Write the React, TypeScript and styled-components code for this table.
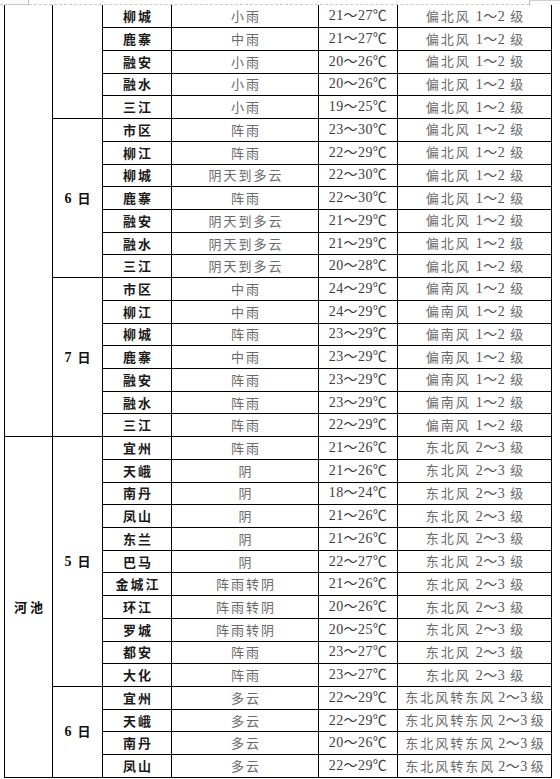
import React, { FC } from 'react'
import styled, { createGlobalStyle } from 'styled-components'

const GlobalStyle = createGlobalStyle`
	html, body {
		margin: 0;
		padding: 0;
		background: #fff;
	}
`

const Page = styled.div`
	width: 560px;
	height: 779px;
	overflow: hidden;
	background: #fff;
`

const PageEdge = styled.div`
	display: flex;
	height: 5px;
`

const EdgeGap = styled.div`
	width: 8px;
	border-bottom: 1px dashed #c8c8c8;
`

const CornerMark = styled.div<{ $side: 'Left' | 'Right' }>`
	width: ${(props) => (props.$side === 'Left' ? '20px' : '30px')};
	background: #fafafa;
	${(props) =>
		props.$side === 'Left'
			? 'border-right: 1px solid #bdbdbd; border-bottom: 1px solid #c8c8c8;'
			: 'border-left: 1px solid #bdbdbd; border-top: 1px solid #d0d0d0;'}
`

const EdgeLine = styled.div`
	flex: 1;
	border-bottom: 1px dashed #c8c8c8;
`

const Table = styled.table`
	margin-left: 4px;
	width: 547px;
	border-collapse: collapse;
	table-layout: fixed;
	font-family: 'Noto Sans CJK SC', 'Liberation Serif', serif;
`

const Col = styled.col<{ $w: number }>`
	width: ${(props) => props.$w}px;
`

const Row = styled.tr`
	height: 22.7px;
`

const Cell = styled.td<{ $top?: boolean }>`
	height: 21.72px;
	padding: 0;
	border: 1px solid #000;
	${(props) => (props.$top ? 'border-top: none;' : '')}
	text-align: center;
	vertical-align: middle;
	white-space: nowrap;
	line-height: 14px;
	overflow: hidden;
`

const RegionCell = styled(Cell)`
	font-size: 13px;
	font-weight: 700;
	color: #111;
	letter-spacing: 3px;
	padding-left: 3px;
`

const DayCell = styled(Cell)`
	font-size: 13px;
	font-weight: 700;
	color: #111;
	span {
		font-family: 'Liberation Serif', serif;
		font-size: 14px;
		margin-right: 6px;
	}
`

const PlaceCell = styled(Cell)`
	font-size: 13px;
	font-weight: 700;
	color: #1a1a1a;
	letter-spacing: 2px;
	padding-left: 2px;
`

const WeatherCell = styled(Cell)`
	font-size: 13px;
	color: #6a6a6a;
	letter-spacing: 2px;
	padding-left: 2px;
`

const TempCell = styled(Cell)`
	font-family: 'Liberation Serif', 'Noto Sans CJK SC', serif;
	font-size: 14px;
	color: #3c3c3c;
	letter-spacing: 0.4px;
`

const WindCell = styled(Cell)`
	font-size: 13px;
	color: #6a6a6a;
	letter-spacing: 2px;
	padding-left: 2px;
`

const Level = styled.em<{ $packed: boolean }>`
	font-style: normal;
	font-family: 'Liberation Serif', 'Noto Sans CJK SC', serif;
	font-size: 14px;
	color: #555;
	letter-spacing: 0.5px;
	margin: ${(props) => (props.$packed ? '0 3px 0 3px' : '0')};
`

interface Forecast {
	place: string
	weather: string
	temp: string
	wind: string
	range: string
}

interface DayGroup {
	day: string
	rows: Forecast[]
}

interface RegionGroup {
	region: string
	days: DayGroup[]
}

const f = (
	place: string,
	weather: string,
	temp: string,
	wind: string,
	range: string
): Forecast => ({ place, weather, temp, wind, range })

const north = '偏北风'
const south = '偏南风'
const ne = '东北风'
const neE = '东北风转东风'

const regions: RegionGroup[] = [
	{
		region: '',
		days: [
			{
				day: '',
				rows: [
					f('柳城', '小雨', '21～27℃', north, '1～2'),
					f('鹿寨', '中雨', '21～27℃', north, '1～2'),
					f('融安', '小雨', '20～26℃', north, '1～2'),
					f('融水', '小雨', '20～26℃', north, '1～2'),
					f('三江', '小雨', '19～25℃', north, '1～2'),
				],
			},
			{
				day: '6',
				rows: [
					f('市区', '阵雨', '23～30℃', north, '1～2'),
					f('柳江', '阵雨', '22～29℃', north, '1～2'),
					f('柳城', '阴天到多云', '22～30℃', north, '1～2'),
					f('鹿寨', '阵雨', '22～30℃', north, '1～2'),
					f('融安', '阴天到多云', '21～29℃', north, '1～2'),
					f('融水', '阴天到多云', '21～29℃', north, '1～2'),
					f('三江', '阴天到多云', '20～28℃', north, '1～2'),
				],
			},
			{
				day: '7',
				rows: [
					f('市区', '中雨', '24～29℃', south, '1～2'),
					f('柳江', '中雨', '24～29℃', south, '1～2'),
					f('柳城', '阵雨', '23～29℃', south, '1～2'),
					f('鹿寨', '中雨', '23～29℃', south, '1～2'),
					f('融安', '阵雨', '23～29℃', south, '1～2'),
					f('融水', '阵雨', '23～29℃', south, '1～2'),
					f('三江', '阵雨', '22～29℃', south, '1～2'),
				],
			},
		],
	},
	{
		region: '河池',
		days: [
			{
				day: '5',
				rows: [
					f('宜州', '阵雨', '21～26℃', ne, '2～3'),
					f('天峨', '阴', '21～26℃', ne, '2～3'),
					f('南丹', '阴', '18～24℃', ne, '2～3'),
					f('凤山', '阴', '21～26℃', ne, '2～3'),
					f('东兰', '阴', '21～26℃', ne, '2～3'),
					f('巴马', '阴', '22～27℃', ne, '2～3'),
					f('金城江', '阵雨转阴', '21～26℃', ne, '2～3'),
					f('环江', '阵雨转阴', '20～26℃', ne, '2～3'),
					f('罗城', '阵雨转阴', '20～25℃', ne, '2～3'),
					f('都安', '阵雨', '23～27℃', ne, '2～3'),
					f('大化', '阵雨', '23～27℃', ne, '2～3'),
				],
			},
			{
				day: '6',
				rows: [
					f('宜州', '多云', '22～29℃', neE, '2～3'),
					f('天峨', '多云', '22～29℃', neE, '2～3'),
					f('南丹', '多云', '20～26℃', neE, '2～3'),
					f('凤山', '多云', '22～29℃', neE, '2～3'),
				],
			},
		],
	},
]

const WindText: FC<{ wind: string; range: string }> = ({ wind, range }) => {
	// short winds get a gap around the level, the long ones are packed tighter
	const packed = wind.length > 3
	const gap = packed ? '' : ' '
	return (
		<>
			{wind}
			{gap}
			<Level $packed={packed}>{range}</Level>
			{gap}级
		</>
	)
}

const App: FC = () => {
	const body: React.ReactNode[] = []
	regions.forEach((region, ri) => {
		const regionSpan = region.days.reduce((n, d) => n + d.rows.length, 0)
		region.days.forEach((group, di) => {
			group.rows.forEach((row, i) => {
				const top = ri === 0 && di === 0 && i === 0
				body.push(
					<Row key={`${ri}-${di}-${i}`}>
						{di === 0 && i === 0 && (
							<RegionCell rowSpan={regionSpan} $top={top}>
								{region.region}
							</RegionCell>
						)}
						{i === 0 && (
							<DayCell rowSpan={group.rows.length} $top={top}>
								{group.day && (
									<>
										<span>{group.day}</span>日
									</>
								)}
							</DayCell>
						)}
						<PlaceCell $top={top}>{row.place}</PlaceCell>
						<WeatherCell $top={top}>{row.weather}</WeatherCell>
						<TempCell $top={top}>{row.temp}</TempCell>
						<WindCell $top={top}>
							<WindText wind={row.wind} range={row.range} />
						</WindCell>
					</Row>
				)
			})
		})
	})

	return (
		<Page>
			<GlobalStyle />
			<PageEdge>
				<EdgeGap />
				<CornerMark $side="Left" />
				<EdgeLine />
				<CornerMark $side="Right" />
			</PageEdge>
			<Table>
				<colgroup>
					<Col $w={48} />
					<Col $w={50} />
					<Col $w={69} />
					<Col $w={147} />
					<Col $w={79} />
					<Col $w={154} />
				</colgroup>
				<tbody>{body}</tbody>
			</Table>
		</Page>
	)
}

export default App
